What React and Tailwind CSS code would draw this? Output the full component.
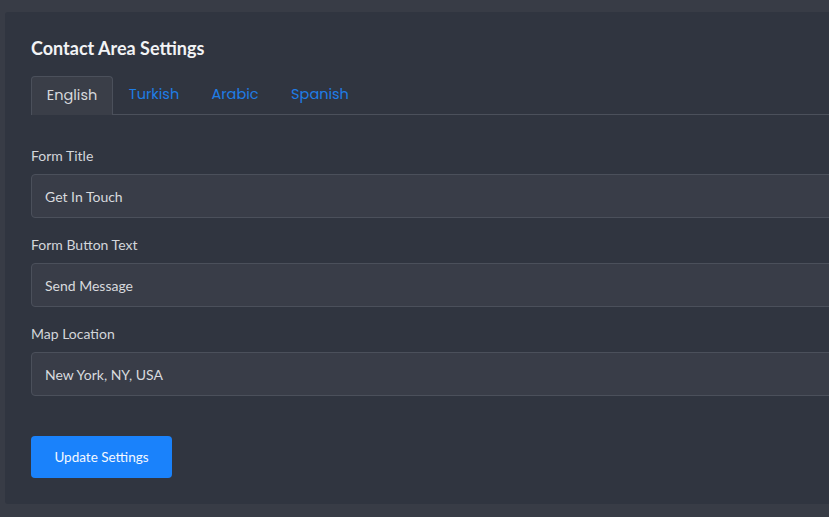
export default function App() {
  const fields = [
    { label: 'Form Title', value: 'Get In Touch' },
    { label: 'Form Button Text', value: 'Send Message' },
    { label: 'Map Location', value: 'New York, NY, USA' },
  ];
  return (
    <div className="w-[829px] h-[517px] overflow-hidden bg-[#383c46] pt-[12px] pl-[5px]" style={{ fontFamily: 'Lato, "Noto Sans", sans-serif' }}>
      <div className="w-[860px] h-[492px] bg-[#303540] rounded-l-[3px] pl-[26px] pt-[25px]">
        <h2 className="text-[18px] leading-[22px] font-bold text-[#f2f3f5]">Contact Area Settings</h2>
        <div className="mt-[17px] flex border-b border-[#4b505b] h-[39px]" style={{ fontFamily: 'Poppins, Inter, sans-serif' }}>
          <div className="w-[82px] h-[39px] flex items-center justify-center border border-b-0 border-[#4b505b] rounded-t-[4px] bg-[#3a3e48] text-[14.5px] text-[#d6d8dc]">
            English
          </div>
          <div className="w-[82px] flex items-center justify-center text-[14.5px] text-[#1f7de6]">Turkish</div>
          <div className="w-[80px] flex items-center justify-center text-[14.5px] text-[#1f7de6]">Arabic</div>
          <div className="w-[90px] flex items-center justify-center text-[14.5px] text-[#1f7de6]">Spanish</div>
        </div>
        <div className="mt-[31px] flex flex-col gap-[17px]">
          {fields.map((f) => (
            <div key={f.label} className="flex flex-col">
              <label className="text-[14px] leading-[20px] text-[#d3d6db]">{f.label}</label>
              <div className="mt-[8px] h-[44px] flex items-center bg-[#393d48] border border-[#4b505b] rounded-[4px] pl-[13px] text-[14px] text-[#d8dade]">
                {f.value}
              </div>
            </div>
          ))}
        </div>
        <button className="mt-[40px] w-[141px] h-[42px] rounded-[4px] bg-[#1a82fb] text-[#f4f8ff] text-[13.5px] font-normal">
          Update Settings
        </button>
      </div>
    </div>
  );
}
